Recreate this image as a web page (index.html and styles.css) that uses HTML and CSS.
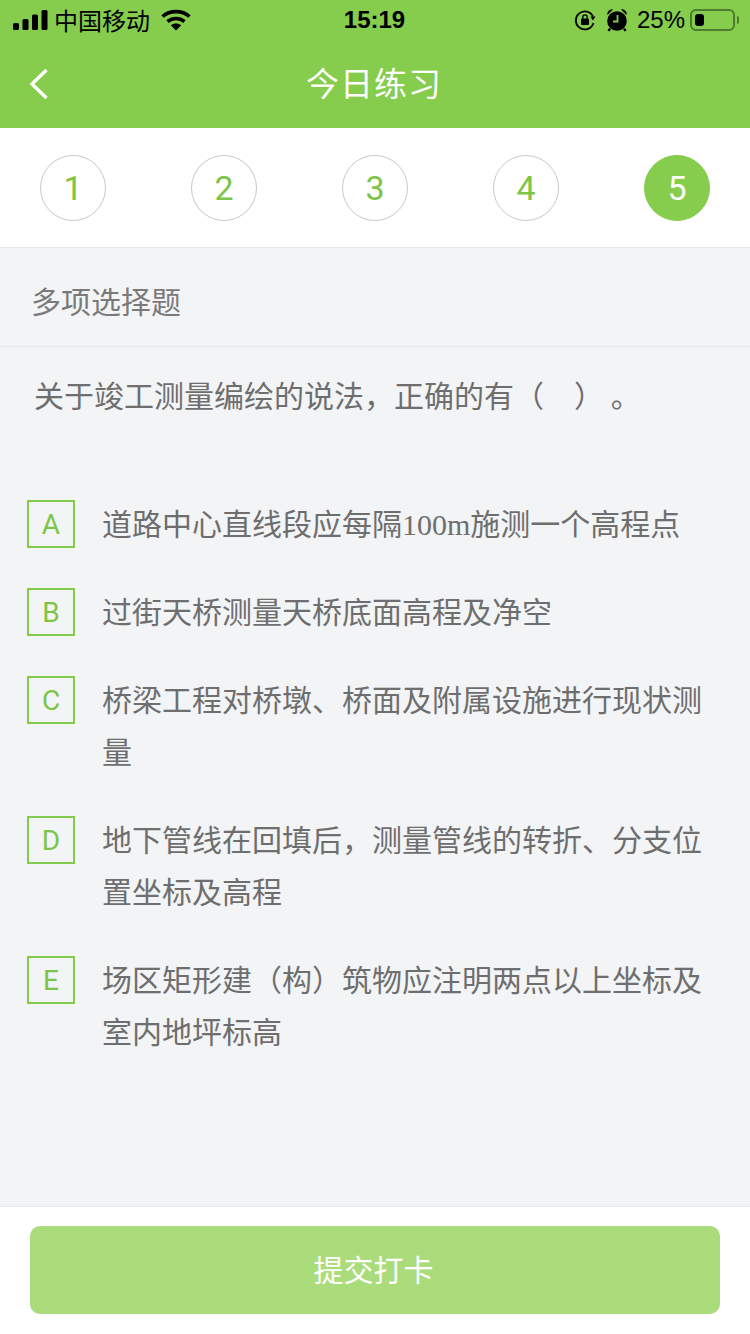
FILE: index.html
```html
<!doctype html>
<html lang="zh-CN">
<head>
	<meta charset="utf-8">
	<meta name="viewport" content="width=device-width, initial-scale=1.0">
	<title>今日练习</title>
	<link rel="stylesheet" href="styles.css">
</head>
<body>
	<div class="page">
		<header class="top">
			<div class="status">
				<div class="status-side">
					<svg class="signal" width="36" height="20" viewBox="0 0 36 20" fill="#000">
						<rect x="0" y="13" width="6" height="7" rx="1.5"/>
						<rect x="9.500" y="9" width="6" height="11" rx="1.500"/>
						<rect x="19" y="4.500" width="6" height="15.500" rx="1.500"/>
						<rect x="28.500" y="0" width="6" height="20" rx="1.500"/>
					</svg>
					<span class="carrier">中国移动</span>
					<svg class="wifi" width="30" height="22" viewBox="0 0 30 22" fill="none" stroke="#000" stroke-width="3.600">
						<path d="M1.500 7.500C9 1 21 1 28.500 7.500"/>
						<path d="M6.500 12.500C11.500 8.500 18.500 8.500 23.500 12.500"/>
						<path d="M15 21.500L9.800 16.200C13 13.800 17 13.800 20.200 16.200Z" fill="#000" stroke="none"/>
					</svg>
				</div>
				<div class="clock">15:19</div>
				<div class="status-side status-right">
					<svg class="lock" width="22" height="22" viewBox="0 0 22 22" fill="none">
						<path d="M19 7.500A9 9 0 1 0 19.500 14" stroke="#000" stroke-width="1.800"/>
						<path d="M21.500 7.500L16.500 7.500L18.800 11.500Z" fill="#000"/>
						<rect x="7" y="9.500" width="8" height="6.500" rx="1" fill="#000"/>
						<path d="M8.800 10V8a2.200 2.200 0 0 1 4.400 0v2" stroke="#000" stroke-width="1.300"/>
					</svg>
					<svg class="alarm" width="22" height="24" viewBox="0 0 22 24">
						<circle cx="11" cy="13" r="9.800" fill="#000"/>
						<path d="M1.500 7A4.500 4.500 0 0 1 7 1.500ZM20.500 7A4.500 4.500 0 0 0 15 1.500Z" fill="#000"/>
						<path d="M4 20.500L2.500 23M18 20.500L19.500 23" stroke="#000" stroke-width="2.400"/>
						<path d="M11.500 7V13.500H7" fill="none" stroke="#86cc4d" stroke-width="1.800"/>
					</svg>
					<span class="percent">25%</span>
					<div class="battery"><div class="battery-level"></div></div>
					<div class="battery-cap"></div>
				</div>
			</div>
			<nav class="nav">
				<svg class="back" width="20" height="32" viewBox="0 0 20 32" fill="none" stroke="#fff" stroke-width="3.400">
					<path d="M17.500 2L3 16L17.500 30"/>
				</svg>
				<h1 class="nav-title">今日练习</h1>
			</nav>
		</header>

		<div class="steps">
			<div class="step">1</div>
			<div class="step">2</div>
			<div class="step">3</div>
			<div class="step">4</div>
			<div class="step step-active">5</div>
		</div>

		<main class="content">
			<div class="type">多项选择题</div>
			<p class="question">关于竣工测量编绘的说法，正确的有（　）&nbsp;。</p>
			<ul class="options">
				<li class="option">
					<span class="letter">A</span>
					<span class="option-text">道路中心直线段应每隔<span class="latin">100m</span>施测一个高程点</span>
				</li>
				<li class="option">
					<span class="letter">B</span>
					<span class="option-text">过街天桥测量天桥底面高程及净空</span>
				</li>
				<li class="option">
					<span class="letter">C</span>
					<span class="option-text">桥梁工程对桥墩、桥面及附属设施进行现状测量</span>
				</li>
				<li class="option">
					<span class="letter">D</span>
					<span class="option-text">地下管线在回填后，测量管线的转折、分支位置坐标及高程</span>
				</li>
				<li class="option">
					<span class="letter">E</span>
					<span class="option-text">场区矩形建（构）筑物应注明两点以上坐标及室内地坪标高</span>
				</li>
			</ul>
		</main>

		<footer class="footer">
			<button class="submit" type="button">提交打卡</button>
		</footer>
	</div>
</body>
</html>
```

FILE: styles.css
```css
* {
	box-sizing: border-box;
}

html, body {
	margin: 0;
	padding: 0;
}

body {
	font-family: "Noto Sans CJK SC", "Liberation Sans", sans-serif;
	background: #f3f4f6;
}

.page {
	width: 750px;
	height: 1334px;
	display: flex;
	flex-direction: column;
	overflow: hidden;
}

/* top green area */
.top {
	height: 128px;
	background: #86cc4d;
}

.status {
	height: 40px;
	padding: 0 11px 0 13px;
	display: flex;
	align-items: center;
	justify-content: space-between;
	color: #000;
}

.status-side {
	width: 260px;
	display: flex;
	align-items: center;
}

.status-right {
	justify-content: flex-end;
}

.carrier {
	margin-left: 5px;
	font-size: 24px;
	line-height: 32px;
}

.wifi {
	margin-left: 11px;
}

.clock {
	margin-right: 3px;
	font-family: "Liberation Sans", sans-serif;
	font-size: 24px;
	font-weight: 700;
	line-height: 32px;
}

.alarm {
	margin-left: 10px;
}

.percent {
	margin-left: 9px;
	font-family: "Liberation Sans", sans-serif;
	font-size: 24px;
	line-height: 32px;
}

.battery {
	width: 45px;
	height: 22px;
	margin-left: 5px;
	padding: 3px;
	border: 2px solid #4c7d2c;
	border-radius: 6px;
}

.battery-level {
	width: 9px;
	height: 12px;
	background: #000;
	border-radius: 3px;
}

.battery-cap {
	width: 2px;
	height: 8px;
	margin-left: 2px;
	background: #4c7d2c;
	border-radius: 0 2px 2px 0;
}

.nav {
	height: 88px;
	position: relative;
	display: flex;
	align-items: center;
	justify-content: center;
}

.back {
	position: absolute;
	left: 29px;
	top: 28px;
}

.nav-title {
	margin: 0 2px 4px 0;
	font-size: 33px;
	font-weight: 400;
	line-height: 84px;
	letter-spacing: 1px;
	color: #fff;
}

/* numbered steps */
.steps {
	height: 120px;
	padding: 0 40px;
	display: flex;
	align-items: center;
	justify-content: space-between;
	background: #fff;
	border-bottom: 1px solid #e8e9ec;
}

.step {
	width: 66px;
	height: 66px;
	display: flex;
	align-items: center;
	justify-content: center;
	border: 1px solid #c9c9c9;
	border-radius: 50%;
	font-family: Roboto, "Liberation Sans", sans-serif;
	font-size: 34px;
	font-weight: 400;
	color: #7cc546;
}

.step-active {
	border-color: #86cc4d;
	background: #86cc4d;
	color: #fff;
}

/* question */
.content {
	flex: 1;
	color: #6e6e6e;
}

.type {
	height: 99px;
	padding: 0 31px;
	border-bottom: 1px solid #e8e9ec;
	font-size: 30px;
	line-height: 104px;
	color: #7a7a7a;
}

.question {
	margin: 0;
	padding: 21px 34px 78px;
	font-size: 30px;
	line-height: 52px;
}

.options {
	margin: 0;
	padding: 0 45px 0 27px;
	list-style: none;
	display: flex;
	flex-direction: column;
	gap: 36px;
}

.option {
	display: flex;
	align-items: flex-start;
	gap: 27px;
}

.letter {
	flex: none;
	width: 48px;
	height: 48px;
	margin-top: 2px;
	display: flex;
	align-items: center;
	justify-content: center;
	border: 2px solid #84cb4c;
	font-family: Roboto, "Liberation Sans", sans-serif;
	font-size: 28px;
	font-weight: 400;
	color: #7cc546;
}

.option-text {
	margin-top: -2px;
	margin-bottom: 2px;
	font-size: 30px;
	line-height: 52px;
}

.latin {
	font-family: "Liberation Serif", serif;
	line-height: 0;
}

/* submit */
.footer {
	height: 128px;
	padding: 19px 30px;
	background: #fff;
	border-top: 1px solid #e8e9ec;
}

.submit {
	display: block;
	width: 100%;
	height: 88px;
	padding: 0 3px 4px 0;
	border: 0;
	border-radius: 10px;
	background: #aadc7b;
	font-family: "Noto Sans CJK SC", sans-serif;
	font-size: 30px;
	color: #fff;
}
```
